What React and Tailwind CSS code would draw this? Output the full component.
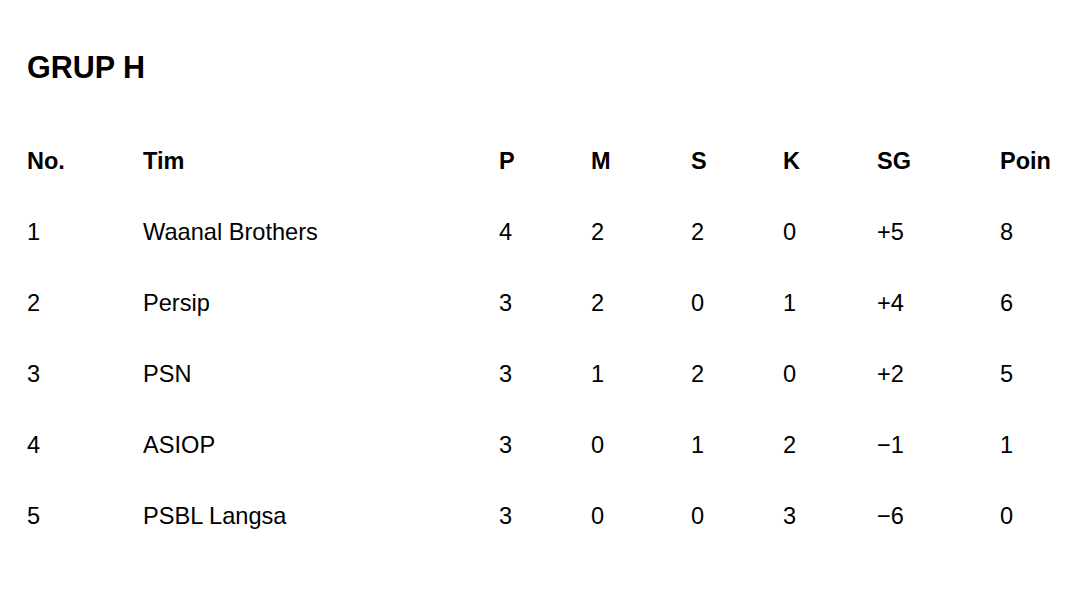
import React from "react";

const rows = [
  ["1", "Waanal Brothers", "4", "2", "2", "0", "+5", "8"],
  ["2", "Persip", "3", "2", "0", "1", "+4", "6"],
  ["3", "PSN", "3", "1", "2", "0", "+2", "5"],
  ["4", "ASIOP", "3", "0", "1", "2", "\u22121", "1"],
  ["5", "PSBL Langsa", "3", "0", "0", "3", "\u22126", "0"],
];

const headers = ["No.", "Tim", "P", "M", "S", "K", "SG", "Poin"];

const cols = "grid grid-cols-[116px_356px_92px_100px_92px_94px_123px_1fr] items-center h-[71px]";

const App = () => {
  return (
    <div className="w-[1080px] h-[608px] bg-white text-black pl-[27px] pt-[49px] font-['Liberation_Sans',Arial,sans-serif]">
      <h1 className="text-[30.5px] leading-[36px] font-bold">GRUP H</h1>

      <div className="mt-[41px]">
        {/* header row */}
        <div className={cols + " font-bold text-[23.5px] leading-none"}>
          {headers.map((h, i) => (
            <span key={i}>{h}</span>
          ))}
        </div>

        {rows.map((row, index) => (
          <div key={index} className={cols + " text-[23.6px] leading-none"}>
            {row.map((cell, i) => (
              <span key={i}>{cell}</span>
            ))}
          </div>
        ))}
      </div>
    </div>
  );
};

export default App;
